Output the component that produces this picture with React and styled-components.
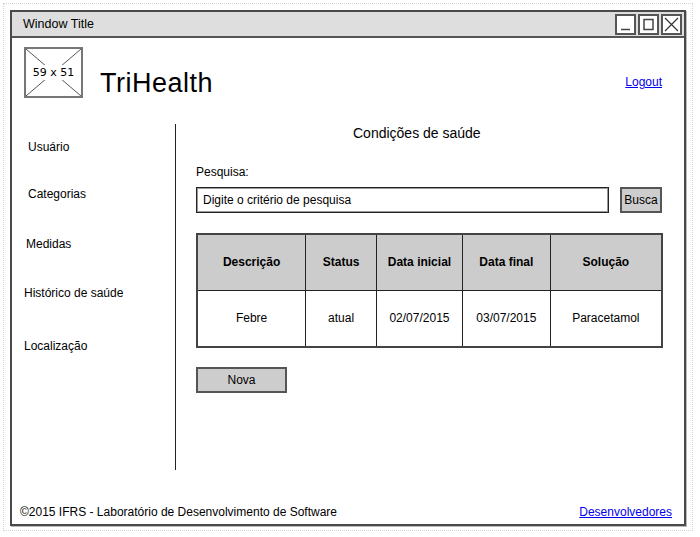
import React from "react";
import styled, { createGlobalStyle } from "styled-components";

const Global = createGlobalStyle`
  html, body { margin: 0; padding: 0; background: #fff; }
  body { font-family: "Liberation Sans", Arial, sans-serif; color: #000; }
  * { box-sizing: border-box; }
`;

const Page = styled.div`
  position: relative;
  width: 700px;
  height: 537px;
  padding: 10px 0 0 10px;
  &::before {
    content: "";
    position: absolute;
    left: 3px; top: 3px; right: 7px; bottom: 6px;
    border: 1px dotted #d4d4d4;
    pointer-events: none;
  }
`;

const Window = styled.div`
  position: relative;
  width: 676px;
  height: 516px;
  border: 2px solid #4a4a4a;
  display: flex;
  flex-direction: column;
  background: #fff;
  box-shadow: 1px 1px 0 #bbb;
`;

const TitleBar = styled.div`
  height: 26px;
  background: #dedede;
  border-bottom: 2px solid #555;
  display: flex;
  align-items: center;
  justify-content: space-between;
  padding: 0 2px 0 11px;
  font-size: 12.5px;
`;

const Controls = styled.div`
  display: flex;
  gap: 2px;
`;

const CtrlBtn = styled.div`
  width: 21px;
  height: 21px;
  border: 2px solid #555;
  background: #fff;
  display: flex;
  align-items: center;
  justify-content: center;
`;

const Header = styled.div`
  height: 73px;
  display: flex;
  align-items: flex-start;
  padding: 9px 22px 0 12px;
`;

const ImgBox = styled.div`
  position: relative;
  width: 59px;
  height: 51px;
  border: 2px solid #777;
  display: flex;
  align-items: center;
  justify-content: center;
  font-family: "DejaVu Sans", sans-serif;
  font-size: 11px;
  svg { position: absolute; inset: 0; }
  span { position: relative; background: #fff; padding: 1px 0; }
`;

const Brand = styled.div`
  font-size: 27px;
  margin: 21px 0 0 17px;
  letter-spacing: 0.5px;
`;

const Link = styled.a`
  color: #0000ee;
  text-decoration: underline;
  font-size: 12px;
  cursor: pointer;
`;

const LogoutWrap = styled.div`
  margin-left: auto;
  margin-top: 25px;
`;

const Body = styled.div`
  flex: 1;
  display: flex;
`;

const Sidebar = styled.nav`
  width: 163px;
  display: flex;
  flex-direction: column;
  padding-top: 28px;
`;

const NavItem = styled.div`
  font-size: 12px;
  padding-left: ${(p) => p.$indent}px;
  margin-top: ${(p) => p.$gap}px;
  line-height: 16px;
`;

const Divider = styled.div`
  width: 1px;
  background: #222;
  margin-top: 13px;
  height: 346px;
`;

const Main = styled.main`
  width: 487px;
  padding: 13px 0 0 20px;
  display: flex;
  flex-direction: column;
`;

const Heading = styled.div`
  font-size: 14px;
  padding-left: 157px;
  line-height: 18px;
`;

const Label = styled.div`
  font-size: 12px;
  margin-top: 23px;
  line-height: 15px;
`;

const SearchRow = styled.div`
  display: flex;
  gap: 11px;
  margin-top: 7px;
  width: 466px;
`;

const Input = styled.div`
  flex: 1;
  height: 26px;
  border: 1px solid #222;
  box-shadow: inset 0 0 0 1px #999;
  font-size: 12px;
  display: flex;
  align-items: center;
  padding-left: 6px;
`;

const Button = styled.div`
  width: ${(p) => p.$w}px;
  height: 26px;
  background: #cdcdcd;
  border: 2px solid #555;
  font-size: 12px;
  display: flex;
  align-items: center;
  justify-content: center;
`;

const Table = styled.table`
  margin-top: 20px;
  width: 467px;
  border-collapse: collapse;
  border: 2px solid #444;
  font-size: 12px;
  th, td { border: 1px solid #222; text-align: center; padding: 0; }
  th { background: #cccccc; height: 56px; font-weight: bold; }
  td { height: 57px; }
`;

const NovaWrap = styled.div`
  margin-top: 19px;
`;

const Footer = styled.div`
  height: 28px;
  display: flex;
  align-items: center;
  justify-content: space-between;
  padding: 4px 12px 0 8px;
  font-size: 12px;
`;

const nav = [
  { label: "Usuário", indent: 16, gap: 0 },
  { label: "Categorias", indent: 16, gap: 31 },
  { label: "Medidas", indent: 14, gap: 34 },
  { label: "Histórico de saúde", indent: 12, gap: 33 },
  { label: "Localização", indent: 12, gap: 37 },
];

const cols = [
  { h: "Descrição", v: "Febre", w: 109 },
  { h: "Status", v: "atual", w: 71 },
  { h: "Data inicial", v: "02/07/2015", w: 86 },
  { h: "Data final", v: "03/07/2015", w: 88 },
  { h: "Solução", v: "Paracetamol", w: 112 },
];

export default function App() {
  return (
    <>
      <Global />
      <Page>
        <Window>
          <TitleBar>
            <span>Window Title</span>
            <Controls>
              <CtrlBtn>
                <svg width="13" height="13" viewBox="0 0 13 13">
                  <line x1="2" y1="11.5" x2="11" y2="11.5" stroke="#444" strokeWidth="1.5" />
                </svg>
              </CtrlBtn>
              <CtrlBtn>
                <svg width="13" height="13" viewBox="0 0 13 13">
                  <rect x="2" y="1.5" width="9" height="10" fill="none" stroke="#444" strokeWidth="1.5" />
                </svg>
              </CtrlBtn>
              <CtrlBtn>
                <svg width="15" height="15" viewBox="0 0 15 15">
                  <path d="M1 1 L14 14 M14 1 L1 14" stroke="#333" strokeWidth="1.2" />
                </svg>
              </CtrlBtn>
            </Controls>
          </TitleBar>
          <Header>
            <ImgBox>
              <svg width="55" height="47" viewBox="0 0 55 47">
                <path d="M0 0 L55 47 M55 0 L0 47" stroke="#555" strokeWidth="1" />
              </svg>
              <span>59 x 51</span>
            </ImgBox>
            <Brand>TriHealth</Brand>
            <LogoutWrap>
              <Link>Logout</Link>
            </LogoutWrap>
          </Header>
          <Body>
            <Sidebar>
              {nav.map((n) => (
                <NavItem key={n.label} $indent={n.indent} $gap={n.gap}>
                  {n.label}
                </NavItem>
              ))}
            </Sidebar>
            <Divider />
            <Main>
              <Heading>Condições de saúde</Heading>
              <Label>Pesquisa:</Label>
              <SearchRow>
                <Input>Digite o critério de pesquisa</Input>
                <Button $w={42}>Busca</Button>
              </SearchRow>
              <Table>
                <thead>
                  <tr>
                    {cols.map((c) => (
                      <th key={c.h} style={{ width: c.w }}>{c.h}</th>
                    ))}
                  </tr>
                </thead>
                <tbody>
                  <tr>
                    {cols.map((c) => (
                      <td key={c.h}>{c.v}</td>
                    ))}
                  </tr>
                </tbody>
              </Table>
              <NovaWrap>
                <Button $w={91}>Nova</Button>
              </NovaWrap>
            </Main>
          </Body>
          <Footer>
            <span>©2015 IFRS - Laboratório de Desenvolvimento de Software</span>
            <Link>Desenvolvedores</Link>
          </Footer>
        </Window>
      </Page>
    </>
  );
}
